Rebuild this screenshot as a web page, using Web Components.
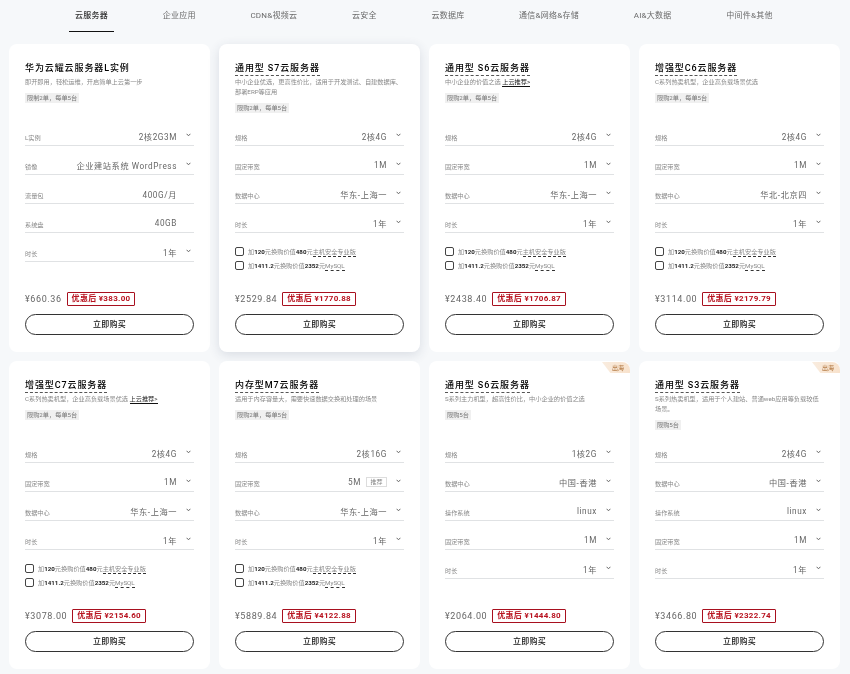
<!doctype html>
<html lang="zh">
<head>
<meta charset="utf-8">
<title>云服务器</title>
<style>
  html, body { margin: 0; background: #f6f8fa; }
  body { font-family: Roboto, "Noto Sans CJK SC", sans-serif; }
</style>
</head>
<body>
<product-page>
  <tab-bar id="tabs"></tab-bar>
  <div id="grid" slot="cards"></div>
</product-page>

<script>
const CHECKS = [
  '加<b>120</b>元换购价值<b>480</b>元<u>主机安全专业版</u>',
  '加<b>1411.2</b>元换购价值<b>2352</b>元<u>MySQL</u>'
];
const REC = ' <a>上云推荐&gt;</a>';
const LIMIT = '限购2单，每单5台';

const PRODUCTS = [
  {name: '华为云耀云服务器L实例', plain: true, desc: '即开即用，轻松运维，开启简单上云第一步', tag: '限制2单，每单5台',
    rows: [['L实例', '2核2G3M'], ['镜像', '企业建站系统 WordPress'], ['流量包', '400G/月', 'static'], ['系统盘', '40GB', 'static'], ['时长', '1年']],
    price: '660.36', sale: '383.00'},
  {name: '通用型 S7云服务器', raised: true, desc: '中小企业优选，更高性价比，适用于开发测试、自建数据库、部署ERP等应用', tag: LIMIT,
    rows: [['规格', '2核4G'], ['固定带宽', '1M'], ['数据中心', '华东-上海一'], ['时长', '1年']], checks: true,
    price: '2529.84', sale: '1770.88'},
  {name: '通用型 S6云服务器', desc: '中小企业的价值之选' + REC, tag: LIMIT,
    rows: [['规格', '2核4G'], ['固定带宽', '1M'], ['数据中心', '华东-上海一'], ['时长', '1年']], checks: true,
    price: '2438.40', sale: '1706.87'},
  {name: '增强型C6云服务器', desc: 'C系列热卖机型，企业高负载场景优选', tag: LIMIT,
    rows: [['规格', '2核4G'], ['固定带宽', '1M'], ['数据中心', '华北-北京四'], ['时长', '1年']], checks: true,
    price: '3114.00', sale: '2179.79'},
  {name: '增强型C7云服务器', desc: 'C系列热卖机型，企业高负载场景优选' + REC, tag: LIMIT,
    rows: [['规格', '2核4G'], ['固定带宽', '1M'], ['数据中心', '华东-上海一'], ['时长', '1年']], checks: true,
    price: '3078.00', sale: '2154.60'},
  {name: '内存型M7云服务器', desc: '适用于内存容量大，需要快速数据交换和处理的场景', tag: LIMIT,
    rows: [['规格', '2核16G'], ['固定带宽', '5M', 'hint'], ['数据中心', '华东-上海一'], ['时长', '1年']], checks: true,
    price: '5889.84', sale: '4122.88'},
  {name: '通用型 S6云服务器', overseas: true, desc: 'S系列主力机型，超高性价比，中小企业的价值之选', tag: '限购5台',
    rows: [['规格', '1核2G'], ['数据中心', '中国-香港'], ['操作系统', 'linux'], ['固定带宽', '1M'], ['时长', '1年']],
    price: '2064.00', sale: '1444.80'},
  {name: '通用型 S3云服务器', overseas: true, desc: 'S系列热卖机型，适用于个人建站、普通web应用等负载较低场景。', tag: '限购5台',
    rows: [['规格', '2核4G'], ['数据中心', '中国-香港'], ['操作系统', 'linux'], ['固定带宽', '1M'], ['时长', '1年']],
    price: '3466.80', sale: '2322.74'}
];

class ProductPage extends HTMLElement {
  constructor() {
    super();
    this.attachShadow({mode: 'open'}).innerHTML = `
      <style>
        :host { display: block; width: 850px; height: 674px; overflow: hidden; background: #f6f8fa; filter: blur(.3px); }
      </style>
      <slot></slot>
      <slot name="cards"></slot>
    `;
  }
}

class TabBar extends HTMLElement {
  constructor() {
    super();
    const tabs = ['云服务器', '企业应用', 'CDN&amp;视频云', '云安全', '云数据库', '通信&amp;网络&amp;存储', 'AI&amp;大数据', '中间件&amp;其他'];
    this.attachShadow({mode: 'open'}).innerHTML = `
      <style>
        :host { display: flex; gap: 42.7px; padding-left: 69px; height: 32px; box-sizing: border-box; }
        span { display: block; padding: 10px 6px 0; height: 32px; box-sizing: border-box; font-size: 8px; line-height: 12px; letter-spacing: .25px; color: #6a6a6a; white-space: nowrap; }
        .on { color: #333; font-weight: 500; border-bottom: 1px solid #111; }
      </style>
      ${ tabs.map((t, i) => `<span class="${ i === 0 ? 'on' : '' }">${ t }</span>`).join('') }
    `;
  }
}

class SpecRow extends HTMLElement {
  constructor() {
    super();
    this.attachShadow({mode: 'open'}).innerHTML = `
      <style>
        :host { display: flex; align-items: center; height: 29px; box-sizing: border-box; border-bottom: 1px solid #e0e2e4; padding-top: 9px; }
        .label { font-size: 6.2px; color: #888; flex: 1; white-space: nowrap; padding-top: 3px; }
        .value { font-size: 8.2px; letter-spacing: .6px; color: #666; white-space: nowrap; }
        .hint { font-size: 6px; color: #888; border: 1px solid #ddd; padding: 0 3.5px; margin-left: 5px; line-height: 8px; letter-spacing: 0; }
        svg { width: 5px; height: 4px; margin: 0 3px 1px 9px; flex: none; }
        :host([static]) svg { visibility: hidden; }
      </style>
      <span class="label"></span>
      <span class="value"></span>
      <svg viewBox="0 0 5 4"><path d="M.6 .8 2.5 2.8 4.4 .8" fill="none" stroke="#666" stroke-width="1"/></svg>
    `;
  }

  connectedCallback() {
    const root = this.shadowRoot;
    root.querySelector('.label').textContent = this.getAttribute('label');
    root.querySelector('.value').textContent = this.getAttribute('value');
    if (this.hasAttribute('hint')) {
      const hint = document.createElement('span');
      hint.className = 'hint';
      hint.textContent = this.getAttribute('hint');
      root.querySelector('.value').after(hint);
    }
  }
}

class AddonCheck extends HTMLElement {
  constructor() {
    super();
    this.attachShadow({mode: 'open'}).innerHTML = `
      <style>
        :host { display: flex; align-items: center; gap: 4px; height: 14px; font-size: 6.2px; color: #888; white-space: nowrap; }
        i { width: 7px; height: 7px; border: 1px solid #444; border-radius: 2px; background: #fff; flex: none; }
        ::slotted(b) { color: #222; }
        ::slotted(u) { text-decoration: none; border-bottom: 1px dashed #333; }
      </style>
      <i></i><span><slot></slot></span>
    `;
  }
}

class ProductCard extends HTMLElement {
  constructor() {
    super();
    this.attachShadow({mode: 'open'}).innerHTML = `
      <style>
        :host { display: flex; flex-direction: column; position: relative; box-sizing: border-box; height: 308px; padding: 0 16px; background: #fff; border-radius: 8px; }
        :host([raised]) { box-shadow: 0 3px 12px rgba(40, 60, 90, .14); }
        .ribbon { position: absolute; top: 1px; right: 0; width: 28px; height: 11px; background: linear-gradient(90deg, #f9ecdf, #f8e2cc); clip-path: polygon(0 0, 100% 0, 100% 100%, 30% 100%); border-top-right-radius: 8px; font-size: 6px; line-height: 11px; text-align: right; padding-right: 6px; box-sizing: border-box; color: #a8682c; }
        .head { height: 73px; padding-top: 18px; box-sizing: border-box; }
        .name { width: fit-content; font-size: 9px; line-height: 13px; font-weight: 500; letter-spacing: .9px; color: #000; white-space: nowrap; border-bottom: 1px dashed #555; }
        :host([plain]) .name { border-bottom-color: transparent; }
        .desc { font-size: 6.2px; line-height: 9.5px; color: #888; margin-top: 2px; }
        .tag { width: fit-content; margin-top: 5.5px; padding: 0 2px; background: #f0f0f0; font-size: 6.2px; line-height: 10px; color: #777; white-space: nowrap; }
        .desc a { color: #222; border-bottom: 1px solid #111; }
        .checks { margin-top: 11px; }
        .foot { position: absolute; left: 16px; right: 16px; bottom: 17px; }
        .prices { display: flex; align-items: center; gap: 5px; margin-bottom: 8px; }
        .was { font-size: 9px; letter-spacing: .6px; color: #666; padding-bottom: 1px; }
        .sale { box-sizing: border-box; height: 14px; border: 1px solid #a8101f; border-radius: 1px; padding: 0 4px; font-size: 8px; line-height: 12px; font-weight: 700; letter-spacing: .3px; color: #b8121f; white-space: nowrap; }
        button { display: block; width: 100%; height: 21px; padding: 1px 0 0; box-sizing: border-box; border: 1px solid #333; border-radius: 11px; background: #fff; font: 500 8px/18px Roboto, "Noto Sans CJK SC", sans-serif; letter-spacing: .3px; color: #111; }
      </style>
      <slot name="ribbon"></slot>
      <div class="head">
        <div class="name"></div>
        <div class="desc"></div>
        <div class="tag"></div>
      </div>
      <slot></slot>
      <div class="checks"><slot name="checks"></slot></div>
      <div class="foot">
        <div class="prices"><span class="was"></span><span class="sale"></span></div>
        <button>立即购买</button>
      </div>
    `;
  }

  set product(p) {
    const root = this.shadowRoot;
    root.querySelector('.name').textContent = p.name;
    root.querySelector('.desc').innerHTML = p.desc;
    root.querySelector('.tag').textContent = p.tag;
    root.querySelector('.was').textContent = '¥' + p.price;
    root.querySelector('.sale').textContent = '优惠后 ¥' + p.sale;
    if (p.plain) this.setAttribute('plain', '');
    if (p.raised) this.setAttribute('raised', '');
    if (p.overseas) {
      const ribbon = document.createElement('div');
      ribbon.className = 'ribbon';
      ribbon.textContent = '出海';
      root.append(ribbon);
    }
    p.rows.forEach(([label, value, mode]) => {
      const row = document.createElement('spec-row');
      row.setAttribute('label', label);
      row.setAttribute('value', value);
      if (mode === 'static') row.setAttribute('static', '');
      if (mode === 'hint') row.setAttribute('hint', '推荐');
      this.append(row);
    });
    if (p.checks) {
      CHECKS.forEach(html => {
        const check = document.createElement('addon-check');
        check.slot = 'checks';
        check.innerHTML = html;
        this.append(check);
      });
    }
  }
}

customElements.define('product-page', ProductPage);
customElements.define('tab-bar', TabBar);
customElements.define('spec-row', SpecRow);
customElements.define('addon-check', AddonCheck);
customElements.define('product-card', ProductCard);

const grid = document.getElementById('grid');
grid.style.cssText = 'display:grid;grid-template-columns:repeat(4,201px);gap:9px;padding:12px 0 0 9px';
PRODUCTS.forEach(p => {
  const card = document.createElement('product-card');
  grid.append(card);
  card.product = p;
});
</script>
</body>
</html>
